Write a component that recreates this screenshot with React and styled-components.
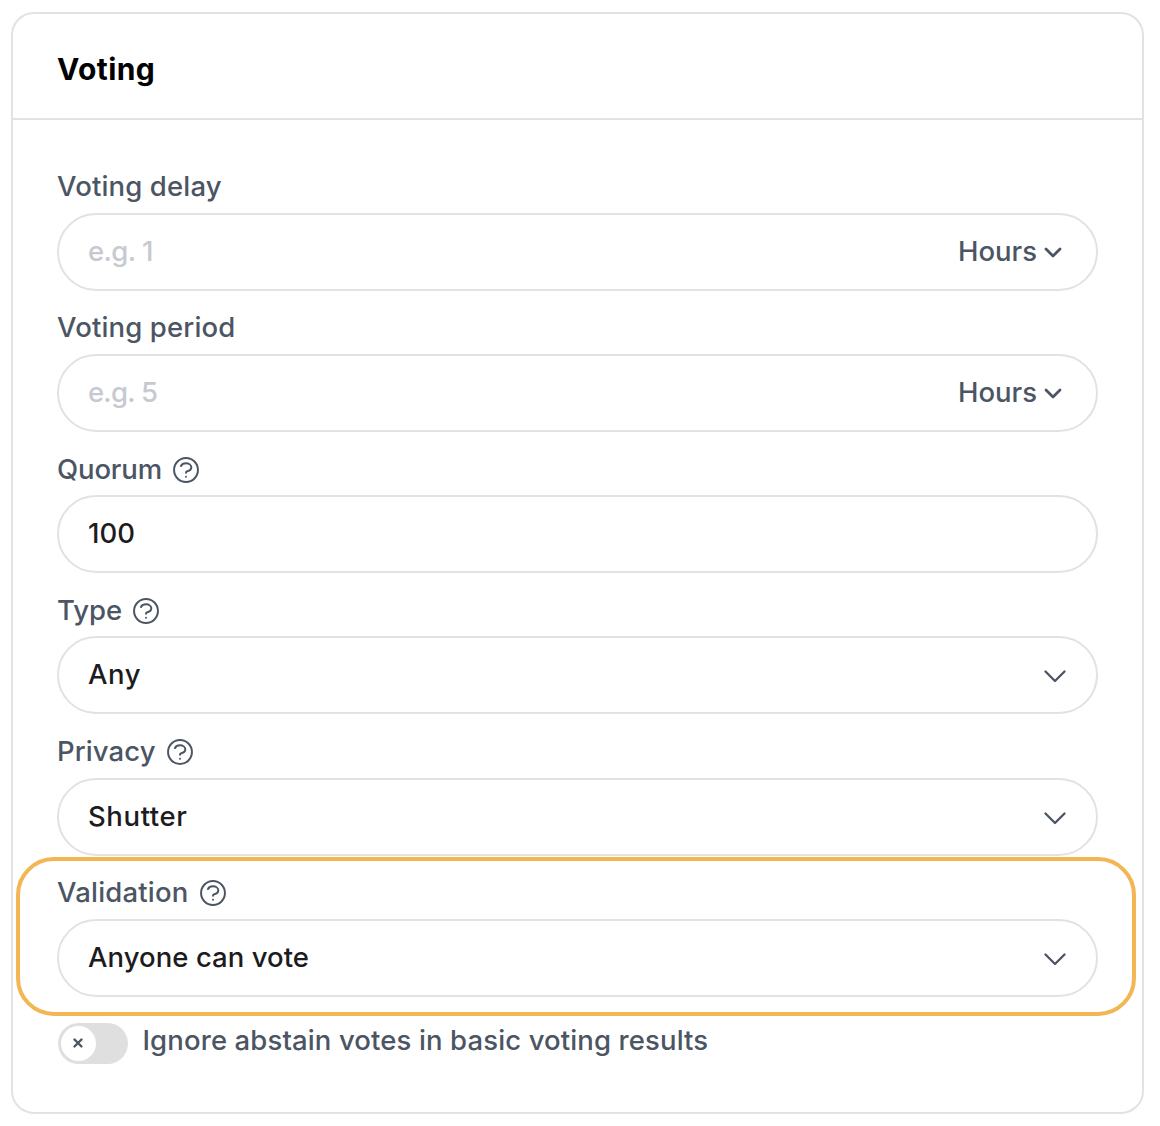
import React from "react";
import styled, { createGlobalStyle } from "styled-components";

const Global = createGlobalStyle`
  *, *::before, *::after { box-sizing: border-box; }
  body { margin: 0; background: #fff; }
`;

const Page = styled.main`
  width: 1160px;
  height: 1126px;
  padding: 12px 16px 12px 11px;
  font-family: Inter, "Liberation Sans", sans-serif;
  font-size: 27.5px;
  font-weight: 450;
  color: #4b5563;
`;

const Card = styled.section`
  height: 1102px;
  border: 2px solid #e2e2e2;
  border-radius: 23px;
`;

const Header = styled.header`
  height: 106px;
  padding: 0 44px;
  display: flex;
  align-items: center;
  border-bottom: 2px solid #e2e2e2;
`;

const Title = styled.h2`
  margin: 6px 0 0;
  font-size: 30px;
  line-height: 40px;
  font-weight: 650;
  letter-spacing: 0.4px;
  color: #000;
`;

const Body = styled.div`
  padding: 29px 44px 0;
`;

const Field = styled.div`
  position: relative;
  height: 141.3px;
`;

const Highlight = styled.div`
  position: absolute;
  left: -41px;
  right: -38px;
  top: 2px;
  height: 159px;
  border: 4px solid #f3b655;
  border-radius: 38px;
`;

const Label = styled.div`
  height: 63.5px;
  padding-top: 19px;
  display: flex;
  gap: 11px;
  line-height: 36px;
`;

const Text = styled.span`
  letter-spacing: ${(p) => p.$track || 0}px;
  white-space: nowrap;
`;

const Control = styled.div`
  height: 78px;
  border: 2px solid #e2e2e2;
  border-radius: 39px;
  padding: 0 30px 2px 29px;
  display: flex;
  align-items: center;
  justify-content: space-between;
  line-height: 36px;
  color: ${(p) => (p.$muted ? "#c7c9d1" : "#1c1c1e")};
`;

const Unit = styled.div`
  display: flex;
  align-items: center;
  gap: 7px;
  margin-right: 4px;
  color: #4b5563;
`;

const Icon = styled.svg`
  flex: none;
  fill: none;
  stroke: #4b5563;
  stroke-linecap: round;
  stroke-linejoin: round;
`;

const HelpSvg = styled(Icon)`
  margin-top: 6px;
`;

const ChevronSvg = styled(Icon)`
  margin-top: 4px;
`;

const ToggleRow = styled.div`
  display: flex;
  gap: 15px;
  padding: 24px 0 0 0.5px;
`;

const ToggleLabel = styled(Text)`
  padding-top: 1.5px;
  line-height: 36px;
`;

const Toggle = styled.div`
  width: 70px;
  height: 41px;
  margin-top: 2px;
  padding: 3px;
  border-radius: 21px;
  background: #dfdfdf;
`;

const Knob = styled.div`
  width: 35px;
  height: 35px;
  border-radius: 50%;
  background: #fff;
  display: flex;
  align-items: center;
  justify-content: center;
`;

const Help = () => (
  <HelpSvg width="26" height="26" viewBox="2.2 2.2 19.6 19.6" strokeWidth="1.5">
    <path d="M8.228 9c.549-1.165 2.030-2 3.772-2 2.210 0 4 1.343 4 3 0 1.400-1.278 2.575-3.006 2.907-.542.104-.994.540-.994 1.093m0 3h.01M21 12a9 9 0 11-18 0 9 9 0 0118 0z" />
  </HelpSvg>
);

const Chevron = () => (
  <ChevronSvg width="22" height="14" viewBox="0 0 22 14" strokeWidth="2.3">
    <path d="M1.500 2.500l9.500 9.500 9.500-9.500" />
  </ChevronSvg>
);

const SmallChevron = () => (
  <ChevronSvg as="svg" width="18" height="12" viewBox="0 0 18 12" strokeWidth="2.8">
    <path d="M2 2L9 9 16 2" />
  </ChevronSvg>
);

const fields = [
  { label: "Voting delay", track: 0.15, value: "e.g. 1", valueTrack: -0.6, muted: true, unit: true },
  { label: "Voting period", track: 0.15, value: "e.g. 5", valueTrack: -0.8, muted: true, unit: true },
  { label: "Quorum", track: -0.15, help: true, value: "100" },
  { label: "Type", help: true, value: "Any", valueTrack: 0.6, select: true },
  { label: "Privacy", track: 0.1, help: true, value: "Shutter", valueTrack: 0.6, select: true },
  { label: "Validation", track: 0.2, help: true, value: "Anyone can vote", valueTrack: 0.05, select: true, marked: true },
];

export default function App() {
  return (
    <Page>
      <Global />
      <Card>
        <Header>
          <Title>Voting</Title>
        </Header>
        <Body>
          {fields.map((f) => (
            <Field key={f.label}>
              <Label>
                <Text $track={f.track}>{f.label}</Text>
                {f.help && <Help />}
              </Label>
              <Control $muted={f.muted}>
                <Text $track={f.valueTrack}>{f.value}</Text>
                {f.unit && (
                  <Unit>
                    <Text>Hours</Text>
                    <SmallChevron />
                  </Unit>
                )}
                {f.select && <Chevron />}
              </Control>
              {f.marked && <Highlight />}
            </Field>
          ))}
          <ToggleRow>
            <Toggle>
              <Knob>
                <Icon width="12" height="12" viewBox="0 0 12 12" strokeWidth="2.4">
                  <path d="M2.500 2.500l7 7M9.500 2.500l-7 7" />
                </Icon>
              </Knob>
            </Toggle>
            <ToggleLabel $track={0.12}>Ignore abstain votes in basic voting results</ToggleLabel>
          </ToggleRow>
        </Body>
      </Card>
    </Page>
  );
}
